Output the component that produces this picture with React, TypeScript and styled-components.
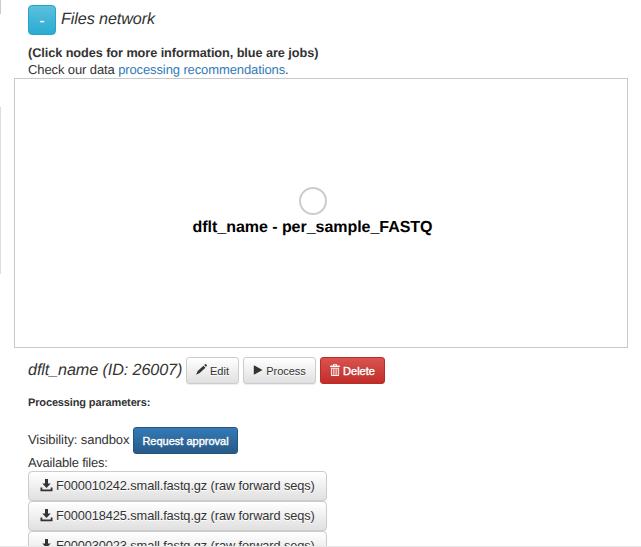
import React from "react";
import styled, { createGlobalStyle, css } from "styled-components";

const GlobalStyle = createGlobalStyle`
  * { box-sizing: border-box; }
  html, body { margin: 0; padding: 0; overflow: hidden; background: #fff; }
  body { font-family: "Liberation Sans", Arial, sans-serif; font-size: 13px; color: #333; text-rendering: geometricPrecision; }
`;

const Page = styled.main`
  position: relative;
  display: flex;
  flex-direction: column;
  width: 641px;
  height: 547px;
  padding-left: 28px;
  overflow: hidden;
`;

const EdgeRule = styled.span<{ $top: number; $height: number; $color: string }>`
  position: absolute;
  left: 0;
  top: ${(p) => p.$top}px;
  width: 1px;
  height: ${(p) => p.$height}px;
  background: ${(p) => p.$color};
`;

const BottomRule = styled.span`
  position: absolute;
  left: 0;
  right: 0;
  bottom: 0;
  height: 1px;
  background: #e7e7e7;
`;

type Tone = "default" | "info" | "primary" | "danger";

const tones = {
  default: css`
    color: #333;
    background: linear-gradient(#fff, #e0e0e0);
    border-color: #ccc;
    text-shadow: 0 1px 0 #fff;
    box-shadow: inset 0 1px 0 rgba(255, 255, 255, 0.15), 0 1px 1px rgba(0, 0, 0, 0.075);
  `,
  info: css`
    color: #fff;
    background: linear-gradient(#5bc0de, #2aabd2);
    border-color: #28a4c9;
    text-shadow: 0 -1px 0 rgba(0, 0, 0, 0.2);
  `,
  primary: css`
    color: #fff;
    background: linear-gradient(#337ab7, #265a88);
    border-color: #245580;
    text-shadow: 0 -1px 0 rgba(0, 0, 0, 0.2);
  `,
  danger: css`
    color: #fff;
    background: linear-gradient(#d9534f, #c12e2a);
    border-color: #b92c28;
    text-shadow: 0 -1px 0 rgba(0, 0, 0, 0.2);
  `,
};

const Button = styled.button<{ $tone: Tone; $width: number }>`
  display: flex;
  flex: none;
  align-items: center;
  justify-content: center;
  gap: 3px;
  width: ${(p) => p.$width}px;
  height: 27px;
  padding: 1px 0 0;
  border: 1px solid;
  border-radius: 3px;
  font: 11px/14px "Liberation Sans", Arial, sans-serif;
  white-space: nowrap;
  ${(p) => tones[p.$tone]}
`;

const StrongLabel = styled.span`
  -webkit-text-stroke: 0.4px #fff;
`;

const ToggleButton = styled(Button)`
  height: 30px;
  font-size: 13px;
  border-radius: 4px;
  -webkit-text-stroke: 0.5px #fff;
`;

const FileButton = styled(Button)`
  height: 30px;
  justify-content: flex-start;
  padding: 0 0 1px 11px;
  border-radius: 4px;
  font-size: 12.8px;
  letter-spacing: -0.1px;
`;

const Header = styled.header`
  display: flex;
  gap: 5px;
  height: 35px;
  padding-top: 5px;
`;

const Title = styled.h2<{ $width?: number; $lineHeight: number }>`
  flex: none;
  width: ${(p) => (p.$width ? `${p.$width}px` : "auto")};
  margin: 0;
  font-size: 16.2px;
  font-weight: 400;
  font-style: italic;
  letter-spacing: -0.11px;
  line-height: ${(p) => p.$lineHeight}px;
  white-space: nowrap;
`;

const Intro = styled.div`
  height: 43px;
  padding-top: 10px;
  letter-spacing: -0.11px;
  line-height: 17px;
  white-space: nowrap;
`;

const Hint = styled.strong`
  display: block;
  height: 16px;
  font-size: 12.7px;
  letter-spacing: -0.06px;
`;

const Link = styled.a`
  color: #337ab7;
  text-decoration: none;
`;

const Network = styled.section`
  display: flex;
  flex: none;
  flex-direction: column;
  align-items: center;
  width: 614px;
  height: 270px;
  margin-left: -14px;
  padding: 108px 17px 0 0;
  border: 1px solid #c8c8c8;
`;

const NodeDot = styled.span`
  flex: none;
  width: 28px;
  height: 28px;
  border: 2px solid #ccc;
  border-radius: 50%;
`;

const NodeLabel = styled.strong`
  margin-top: 4px;
  color: #000;
  font-size: 16px;
  letter-spacing: -0.04px;
  line-height: 18px;
  white-space: nowrap;
`;

const Actions = styled.div`
  display: flex;
  flex: none;
  gap: 4px;
  height: 36px;
  padding-top: 9px;
`;

const Parameters = styled.h3`
  flex: none;
  margin: 12px 0 0;
  font-size: 11px;
  letter-spacing: -0.14px;
  line-height: 14px;
`;

const Visibility = styled.div`
  display: flex;
  flex: none;
  height: 27px;
  margin-top: 17px;
`;

const VisibilityText = styled.span`
  flex: none;
  width: 105px;
  letter-spacing: -0.09px;
  line-height: 26px;
  white-space: nowrap;
`;

const Available = styled.div`
  flex: none;
  height: 17px;
  letter-spacing: -0.2px;
  line-height: 17px;
`;

const FileList = styled.div`
  display: flex;
  flex: none;
  flex-direction: column;
`;

const Icon = styled.svg`
  flex: none;
  display: block;
  fill: currentColor;
`;

const ActionIcon = styled(Icon)`
  margin-bottom: 3px;
`;

const Pencil = () => (
  <ActionIcon width="11" height="11" viewBox="0 0 11 11">
    <path d="M8.2 1.1 9.3.1q.4-.2.7.1l.8.9q.3.4 0 .8L9.9 2.8zM7.5 1.8l1.9 1.9-5.7 5.4L.1 10.7 1.7 7.1z" />
  </ActionIcon>
);

const Play = () => (
  <ActionIcon width="10" height="10" viewBox="0 0 10 10">
    <path d="M.8.2 9.5 5 .8 9.8z" />
  </ActionIcon>
);

const Trash = () => (
  <ActionIcon width="10" height="12" viewBox="0 0 10 12">
    <path
      fillRule="evenodd"
      d="M3 1q0-1 1-1h2q1 0 1 1v.6h2q1 0 1 1V3H0v-.4q0-1 1-1h2zm1 .6h2V.8H4zM.9 3.7h8.2V11q0 1-1 1H1.9q-1 0-1-1zm.9.8v6.6h1V4.5zm1.8 0v6.6h1V4.5zm1.8 0v6.6h1V4.5zm1.8 0v6.6h1V4.5z"
    />
  </ActionIcon>
);

const Download = () => (
  <Icon width="13" height="13" viewBox="0 0 13 13">
    <path d="M5 0h3v4.5h2.7L6.5 9 2.3 4.5H5zM.5 8.5h1.8v2h8.4v-2h1.8v3.8H.5z" />
  </Icon>
);

const files = [
  "F000010242.small.fastq.gz (raw forward seqs)",
  "F000018425.small.fastq.gz (raw forward seqs)",
  "F000030023.small.fastq.gz (raw forward seqs)",
];

export default function App() {
  return (
    <>
      <GlobalStyle />
      <Page>
        <Header>
          <ToggleButton $tone="info" $width={28}>-</ToggleButton>
          <Title $lineHeight={28}>Files network</Title>
        </Header>
        <Intro>
          <Hint>(Click nodes for more information, blue are jobs)</Hint>
          Check our data <Link>processing recommendations</Link>.
        </Intro>
        <Network>
          <NodeDot />
          <NodeLabel>dflt_name - per_sample_FASTQ</NodeLabel>
        </Network>
        <Actions>
          <Title $width={154} $lineHeight={26}>dflt_name (ID: 26007)</Title>
          <Button $tone="default" $width={53}><Pencil />Edit</Button>
          <Button $tone="default" $width={73}><Play />Process</Button>
          <Button $tone="danger" $width={65}>
            <Trash /><StrongLabel>Delete</StrongLabel>
          </Button>
        </Actions>
        <Parameters>Processing parameters:</Parameters>
        <Visibility>
          <VisibilityText>Visibility: sandbox</VisibilityText>
          <Button $tone="primary" $width={105}>
            <StrongLabel>Request approval</StrongLabel>
          </Button>
        </Visibility>
        <Available>Available files:</Available>
        <FileList>
          {files.map((name) => (
            <FileButton key={name} $tone="default" $width={299}><Download />{name}</FileButton>
          ))}
        </FileList>
        <EdgeRule $top={0} $height={14} $color="#ccc" />
        <EdgeRule $top={107} $height={167} $color="#ddd" />
        <BottomRule />
      </Page>
    </>
  );
}
